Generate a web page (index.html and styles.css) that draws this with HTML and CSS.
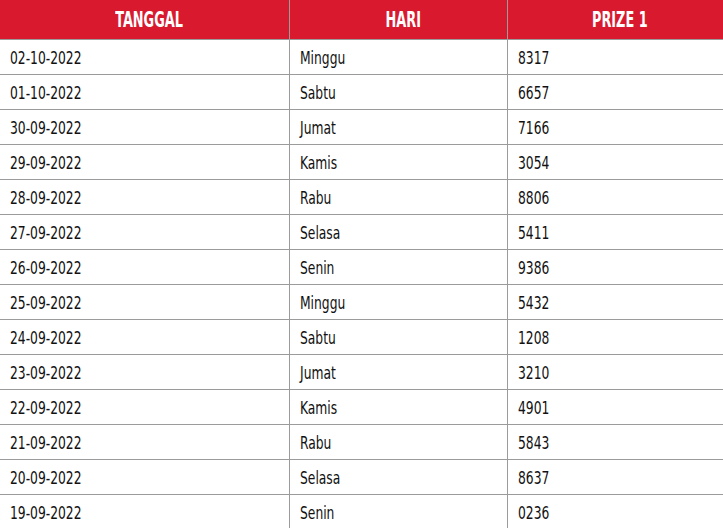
FILE: index.html
```html
<!DOCTYPE html>
<html lang="id">
<head>
<meta charset="utf-8">
<title>Result</title>
<link rel="stylesheet" href="styles.css">
</head>
<body>
<table class="result">
  <colgroup>
    <col class="c1"><col class="c2"><col class="c3">
  </colgroup>
  <thead>
    <tr><th><span>TANGGAL</span></th><th><span>HARI</span></th><th><span>PRIZE 1</span></th></tr>
  </thead>
  <tbody>
    <tr><td><span>02-10-2022</span></td><td><span>Minggu</span></td><td><span>8317</span></td></tr>
    <tr><td><span>01-10-2022</span></td><td><span>Sabtu</span></td><td><span>6657</span></td></tr>
    <tr><td><span>30-09-2022</span></td><td><span>Jumat</span></td><td><span>7166</span></td></tr>
    <tr><td><span>29-09-2022</span></td><td><span>Kamis</span></td><td><span>3054</span></td></tr>
    <tr><td><span>28-09-2022</span></td><td><span>Rabu</span></td><td><span>8806</span></td></tr>
    <tr><td><span>27-09-2022</span></td><td><span>Selasa</span></td><td><span>5411</span></td></tr>
    <tr><td><span>26-09-2022</span></td><td><span>Senin</span></td><td><span>9386</span></td></tr>
    <tr><td><span>25-09-2022</span></td><td><span>Minggu</span></td><td><span>5432</span></td></tr>
    <tr><td><span>24-09-2022</span></td><td><span>Sabtu</span></td><td><span>1208</span></td></tr>
    <tr><td><span>23-09-2022</span></td><td><span>Jumat</span></td><td><span>3210</span></td></tr>
    <tr><td><span>22-09-2022</span></td><td><span>Kamis</span></td><td><span>4901</span></td></tr>
    <tr><td><span>21-09-2022</span></td><td><span>Rabu</span></td><td><span>5843</span></td></tr>
    <tr><td><span>20-09-2022</span></td><td><span>Selasa</span></td><td><span>8637</span></td></tr>
    <tr><td><span>19-09-2022</span></td><td><span>Senin</span></td><td><span>0236</span></td></tr>
  </tbody>
</table>
</body>
</html>
```

FILE: styles.css
```css
html, body {
  margin: 0;
  padding: 0;
  background: #ffffff;
}
body {
  font-family: "DejaVu Sans Condensed", "Liberation Sans", sans-serif;
}
.result {
  width: 723px;
  border-collapse: collapse;
  table-layout: fixed;
}
.c1 { width: 289px; }
.c2 { width: 218px; }
.c3 { width: 216px; }
.result th {
  background: #d9192e;
  color: #ffffff;
  font-weight: bold;
  font-size: 22px;
  height: 39px;
  padding: 0 0 0 10px;
  text-align: center;
  vertical-align: middle;
  border-right: 1px solid #9b9b9b;
  border-bottom: 1px solid #9b9b9b;
  box-sizing: border-box;
  white-space: nowrap;
}
.result th span {
  display: inline-block;
  transform: scaleX(0.65);
  transform-origin: center center;
}
.result td {
  color: #111111;
  font-size: 18px;
  height: 35px;
  padding: 1px 0 0 10px;
  vertical-align: middle;
  border-right: 1px solid #9b9b9b;
  border-bottom: 1px solid #9b9b9b;
  box-sizing: border-box;
  white-space: nowrap;
}
.result td span {
  display: inline-block;
  transform: scaleX(0.76);
  transform-origin: left center;
}
.result th:last-child,
.result td:last-child {
  border-right: none;
}
```
